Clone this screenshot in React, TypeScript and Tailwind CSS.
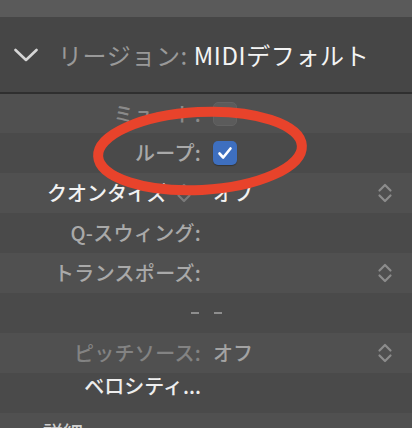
const font = { fontFamily: '"Noto Sans CJK JP", "Noto Sans", sans-serif' };

const Stepper = ({ className = "" }: { className?: string }) => (
  <svg width="16" height="22" viewBox="0 0 16 22" className={className} fill="none">
    <path d="M2.5 8.5 L8 3 L13.5 8.5" stroke="currentColor" strokeWidth="2.2" strokeLinecap="round" strokeLinejoin="round" />
    <path d="M2.5 13.5 L8 19 L13.5 13.5" stroke="currentColor" strokeWidth="2.2" strokeLinecap="round" strokeLinejoin="round" />
  </svg>
);

const Row = ({
  shade,
  label,
  labelClass = "text-[#a9a9a9]",
  children,
  stepper = false,
  h = "h-[40px]",
}: {
  shade: "light" | "dark";
  label?: React.ReactNode;
  labelClass?: string;
  children?: React.ReactNode;
  stepper?: boolean;
  h?: string;
}) => (
  <div className={`flex items-center ${h} ${shade === "light" ? "bg-[#505050]" : "bg-[#4a4a4a]"}`}>
    <div className={`w-[201px] shrink-0 flex justify-end items-center text-[20px] leading-none tracking-[0.3px] ${labelClass}`}>{label}</div>
    <div className="flex-1 flex items-center pl-[12px] text-[20px] leading-none">{children}</div>
    {stepper && <Stepper className="text-[#8c8c8c] mr-[19px]" />}
  </div>
);

const App = () => {
  return (
    <div className="relative w-[412px] h-[428px] overflow-hidden bg-[#4a4a4a] select-none font-medium" style={font}>
      <div className="h-[17px] bg-[#5a5a5a]" />
      <div className="h-[75px] bg-[#464646] flex items-center pl-[14px]">
        <svg width="24" height="14" viewBox="0 0 24 14" fill="none" className="text-[#d6d6d6]">
          <path d="M1.5 2 L12 12 L22.5 2" stroke="currentColor" strokeWidth="2.6" strokeLinecap="round" strokeLinejoin="round" />
        </svg>
        <div className="ml-[20px] text-[24px] leading-none tracking-[0.6px] font-normal">
          <span className="text-[#999999]">リージョン: </span>
          <span className="text-[#f4f4f4]">MIDIデフォルト</span>
        </div>
      </div>
      <div className="h-[2px] bg-[#2f2f2f]" />

      <Row shade="light" h="h-[39px]" label="ミュート:" labelClass="text-[#8a8a8a]">
        <div className="w-[24px] h-[24px] rounded-[5px] bg-[#5b5b5b] border border-[#626262]" />
      </Row>
      <Row shade="dark" label="ループ:">
        <div className="w-[24px] h-[24px] rounded-[5px] bg-[#3e6fbf] flex items-center justify-center shadow-[0_1px_1px_rgba(0,0,0,0.3)]">
          <svg width="16" height="14" viewBox="0 0 16 14" fill="none">
            <path d="M2.5 7.5 L6.2 11.5 L13.5 2.5" stroke="#ffffff" strokeWidth="2.6" strokeLinecap="round" strokeLinejoin="round" />
          </svg>
        </div>
      </Row>
      <div className="flex items-center h-[40px] bg-[#505050]">
        <div className="w-[201px] shrink-0 flex items-center pl-[47px] text-[20px] leading-none text-[#f2f2f2]">
          <span>クオンタイズ</span>
          <Stepper className="text-[#7a7a7a] ml-[10px]" />
        </div>
        <div className="flex-1 pl-[12px] text-[20px] leading-none text-[#f2f2f2]">オフ</div>
        <Stepper className="text-[#8c8c8c] mr-[19px]" />
      </div>
      <Row shade="dark" label="Q-スウィング:" />
      <Row shade="light" label="トランスポーズ:" stepper />
      <div className="flex items-center h-[40px] bg-[#4a4a4a]">
        <div className="w-[199px] shrink-0 flex justify-end">
          <div className="w-[8px] h-[2px] bg-[#8e8e8e]" />
        </div>
        <div className="pl-[15px]">
          <div className="w-[8px] h-[2px] bg-[#8e8e8e]" />
        </div>
      </div>
      <Row shade="light" label="ピッチソース:" labelClass="text-[#838383]" stepper>
        <span className="text-[#a3a3a3]">オフ</span>
      </Row>
      <div className="h-[40px] bg-[#4a4a4a] flex items-start">
        <div className="w-[201px] pt-[3px] flex justify-end text-[20px] leading-none text-[#eeeeee]">ベロシティ...</div>
      </div>
      <div className="h-[20px] bg-[#505050] pl-[43px] pt-[10px] text-[20px] leading-none text-[#cfcfcf]">詳細</div>

      <svg className="absolute inset-0 pointer-events-none" width="412" height="428" viewBox="0 0 412 428" fill="none">
        <ellipse cx="200" cy="151" rx="102" ry="39" transform="rotate(-3 200 151)" stroke="#e8432b" strokeWidth="10" />
      </svg>
    </div>
  );
};

export default App;
